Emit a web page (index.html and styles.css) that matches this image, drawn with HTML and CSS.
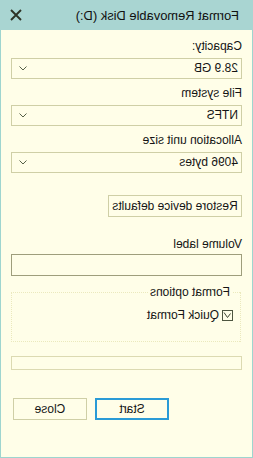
FILE: index.html
```html
<!DOCTYPE html>
<html>
<head>
<meta charset="utf-8">
<link rel="stylesheet" href="styles.css">
</head>
<body>
<div class="window">
  <div class="titlebar">
    <span class="title">Format Removable Disk (D:)</span>
    <svg class="close" width="12" height="12" viewBox="0 0 12 12"><path d="M1 1 L11 11 M11 1 L1 11" stroke="#2e3326" stroke-width="1.9" fill="none"/></svg>
  </div>
  <div class="content">
    <div class="label first">Capacity:</div>
    <div class="combo"><span>28.9 GB</span><svg width="8" height="5" viewBox="0 0 8 5"><path d="M0.5 0.5 L4 4 L7.5 0.5" stroke="#556047" stroke-width="1" fill="none"/></svg></div>
    <div class="label">File system</div>
    <div class="combo"><span>NTFS</span><svg width="8" height="5" viewBox="0 0 8 5"><path d="M0.5 0.5 L4 4 L7.5 0.5" stroke="#556047" stroke-width="1" fill="none"/></svg></div>
    <div class="label">Allocation unit size</div>
    <div class="combo"><span>4096 bytes</span><svg width="8" height="5" viewBox="0 0 8 5"><path d="M0.5 0.5 L4 4 L7.5 0.5" stroke="#556047" stroke-width="1" fill="none"/></svg></div>
    <div class="btn restore">Restore device defaults</div>
    <div class="label vol">Volume label</div>
    <div class="textbox"></div>
    <fieldset class="group">
      <legend>Format options</legend>
      <div class="check">
        <svg class="box" width="11" height="11" viewBox="0 0 11 11"><rect x="0.5" y="0.5" width="10" height="10" fill="none" stroke="#4d5540"/><path d="M2.5 3.5 L5.5 7.5 L9 2.5" stroke="#3f4634" stroke-width="1" fill="none"/></svg>
        <span>Quick Format</span>
      </div>
    </fieldset>
    <div class="progress"></div>
    <div class="buttons">
      <div class="btn start">Start</div>
      <div class="btn">Close</div>
    </div>
  </div>
</div>
</body>
</html>
```
FILE: styles.css
```css
html, body {
  margin: 0;
  padding: 0;
  background: #fffee8;
}
.window {
  width: 253px;
  height: 458px;
  box-sizing: border-box;
  border: 1px solid #9ed5cf;
  border-top: none;
  background: #fffee8;
  transform: scaleX(-1);
  font-family: "Liberation Sans", Arial, sans-serif;
  font-size: 12px;
  line-height: 15px;
  color: #151515;
}
.titlebar {
  height: 30px;
  margin: 0 -1px;
  background: #a9d5d2;
  display: flex;
  align-items: center;
  justify-content: space-between;
  padding: 0 10px 0 14px;
}
.title {
  font-size: 12.9px;
  color: #111;
}
.close {
  display: block;
  margin-top: -1px;
}
.content {
  padding: 0 10px;
}
.label {
  margin-top: 7px;
  margin-bottom: 4px;
}
.label.first {
  margin-top: 9px;
}
.combo {
  height: 21px;
  box-sizing: border-box;
  border: 1px solid #cfcfa6;
  display: flex;
  align-items: center;
  justify-content: space-between;
  padding: 0 7px 0 3px;
}
.combo svg {
  display: block;
}
.btn {
  height: 22px;
  box-sizing: border-box;
  border: 1px solid #cfcfa6;
  display: flex;
  align-items: center;
  justify-content: center;
  width: 74px;
}
.restore {
  width: 134px;
  margin-top: 22px;
}
.label.vol {
  margin-top: 20px;
  margin-bottom: 2px;
}
.textbox {
  height: 22px;
  box-sizing: border-box;
  border: 1px solid #9e9e7c;
}
.group {
  margin: 9px 0 0 1px;
  padding: 0 0 0 7px;
  height: 57px;
  box-sizing: border-box;
  border: 1px dotted #ebe9bd;
  width: 230px;
}
.group legend {
  padding: 0 2px;
  margin-left: 1px;
}
.check {
  display: flex;
  align-items: center;
  gap: 3px;
  margin-top: 8px;
}
.check .box {
  display: block;
}
.progress {
  margin-top: 14px;
  height: 14px;
  box-sizing: border-box;
  border: 1px solid #dcdab2;
}
.buttons {
  display: flex;
  justify-content: flex-end;
  gap: 8px;
  margin-top: 28px;
  padding-right: 2px;
}
.btn.start {
  border: 2px solid #2a9bd6;
}
```
